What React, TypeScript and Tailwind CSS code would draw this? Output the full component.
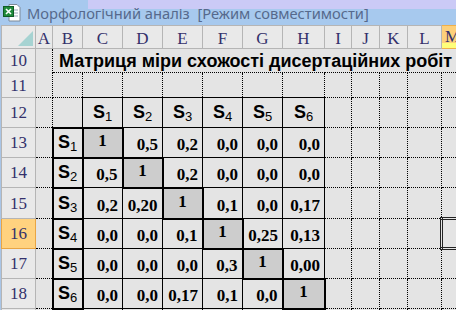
import React from 'react';

const colWidths = [34, 17, 30, 40, 40, 40, 40, 40, 42, 27, 28, 28, 34, 60];
const letters = ['A', 'B', 'C', 'D', 'E', 'F', 'G', 'H', 'I', 'J', 'K', 'L', 'M'];

const matrix = [
  ['1', '0,5', '0,2', '0,0', '0,0', '0,0'],
  ['0,5', '1', '0,2', '0,0', '0,0', '0,0'],
  ['0,2', '0,20', '1', '0,1', '0,0', '0,17'],
  ['0,0', '0,0', '0,1', '1', '0,25', '0,13'],
  ['0,0', '0,0', '0,0', '0,3', '1', '0,00'],
  ['0,0', '0,0', '0,17', '0,1', '0,0', '1'],
];

const dotted = 'border border-dotted border-black';
const thin = 'border border-solid border-black';
const thick = 'border-2 border-solid border-black';
const headFont = "font-['Liberation_Serif',serif] text-[17px] leading-[19px] text-[#33306b]";
const rowHead = `border border-solid border-[#b5b5b5] bg-[#e9e9e9] p-0 text-center ${headFont}`;
const num =
  "p-0 pr-[4px] pb-[3px] text-right align-bottom font-['Liberation_Serif',serif] text-[17px] leading-[18px] font-bold text-black";

function ExcelIcon() {
  return (
    <svg width="18" height="19" viewBox="0 0 18 19">
      <path d="M6 1.5h8l3 3v13.5H6z" fill="#fff" stroke="#7d8a99" />
      <path d="M8 7h7M8 10h7M8 13h7" stroke="#9aa7b5" />
      <rect x="0.5" y="3.5" width="10" height="10" fill="#1f8a3a" stroke="#0f5c24" />
      <path d="M3 6l5 5M8 6l-5 5" stroke="#fff" strokeWidth="1.6" />
    </svg>
  );
}

function SLabel({ n }: { n: number }) {
  return (
    <span className="font-['Liberation_Sans',Arial,sans-serif] text-[18px] leading-[20px] font-bold text-black">
      S<sub className="text-[13px] font-normal">{n}</sub>
    </span>
  );
}

export default function App() {
  return (
    <div className="h-[310px] w-[456px] overflow-hidden bg-[#e4e4e4]">
      <div className="flex h-[25px] items-center gap-[6px] pl-[3px] [background:linear-gradient(to_right,#a7c9ee_88px,transparent_88px),linear-gradient(to_bottom,#cbcaf6_9px,#a7c9ee_9px)]">
        <ExcelIcon />
        <span className="font-['Noto_Sans',sans-serif] text-[14.7px] leading-[20px] whitespace-pre text-[#56698c]">
          Морфологічний аналіз  [Режим совместимости]
        </span>
      </div>
      <div className="border-l border-[#a9c5e6]">
        <table className="table-fixed border-collapse" style={{ width: colWidths.reduce((a, b) => a + b, 0) }}>
          <colgroup>
            {colWidths.map((w, i) => (
              <col key={i} style={{ width: w }} />
            ))}
          </colgroup>
          <tbody>
            <tr className="h-[23px]">
              <td className="border border-solid border-[#b5b5b5] bg-[#e9e9e9] p-0">
                <div className="flex h-[21px] items-end justify-end pr-[2px] pb-[2px]">
                  <svg width="15" height="15" viewBox="0 0 15 15">
                    <path d="M15 0V15H0z" fill="#a6d3d2" />
                  </svg>
                </div>
              </td>
              {letters.map((l) => (
                <td
                  key={l}
                  className={
                    l === 'M'
                      ? `border border-solid border-[#f0b04a] bg-[#fdd07a] p-0 pt-[1px] align-top shadow-[inset_0_-5px_0_#ffff7a] ${headFont}`
                      : `border border-solid border-[#b5b5b5] bg-[#e9e9e9] p-0 pt-[2px] text-center ${headFont}`
                  }
                >
                  {l === 'M' ? <span className="pl-[3px]">M</span> : l}
                </td>
              ))}
            </tr>

            <tr className="h-[24px]">
              <td className={rowHead}>10</td>
              <td rowSpan={2} className={`${dotted} p-0`} />
              <td
                colSpan={12}
                className={`${dotted} p-0 pl-[6px] font-['Liberation_Sans',Arial,sans-serif] text-[18px] leading-[20px] font-bold whitespace-nowrap text-black`}
              >
                Матриця міри схожості дисертаційних робіт
              </td>
            </tr>

            <tr className="h-[25px]">
              <td className={rowHead}>11</td>
              {letters.slice(1).map((l) => (
                <td key={l} className={`${dotted} p-0`} />
              ))}
            </tr>

            <tr className="h-[30px]">
              <td className={rowHead}>12</td>
              <td className={`${dotted} p-0`} />
              <td className={`${dotted} p-0`} />
              {[1, 2, 3, 4, 5, 6].map((n) => (
                <td key={n} className={`${thin} p-0 pb-[5px] text-center align-bottom leading-[20px]`}>
                  <SLabel n={n} />
                </td>
              ))}
              {letters.slice(8).map((l) => (
                <td key={l} className={`${dotted} p-0`} />
              ))}
            </tr>

            {matrix.map((row, r) => (
              <tr key={r} className={r === 2 ? 'h-[31px]' : 'h-[30px]'}>
                <td
                  className={
                    r === 3
                      ? `border border-solid border-[#e9a543] bg-[#ffd27f] p-0 text-center ${headFont}`
                      : rowHead
                  }
                >
                  {13 + r}
                </td>
                <td className={`${dotted} p-0`} />
                <td className={`${thick} p-0 pb-[5px] text-center align-bottom leading-[20px]`}>
                  <SLabel n={r + 1} />
                </td>
                {row.map((v, c) =>
                  c === r ? (
                    <td
                      key={c}
                      className={`${thick} bg-[#cdcdcd] p-0 pb-[3px] text-center font-['Liberation_Serif',serif] text-[17px] leading-[18px] font-bold text-black`}
                    >
                      {v}
                    </td>
                  ) : (
                    <td key={c} className={`${thin} ${num}`}>
                      {v}
                    </td>
                  ),
                )}
                {letters.slice(8).map((l) => (
                  <td
                    key={l}
                    className={
                      l === 'M' && r === 3
                        ? 'border-[3px] border-double border-[#222] p-0'
                        : `${dotted} p-0`
                    }
                  />
                ))}
              </tr>
            ))}

            <tr className="h-[30px]">
              <td className={rowHead} />
              {letters.map((l) => (
                <td key={l} className={`${dotted} p-0`} />
              ))}
            </tr>
          </tbody>
        </table>
      </div>
    </div>
  );
}
